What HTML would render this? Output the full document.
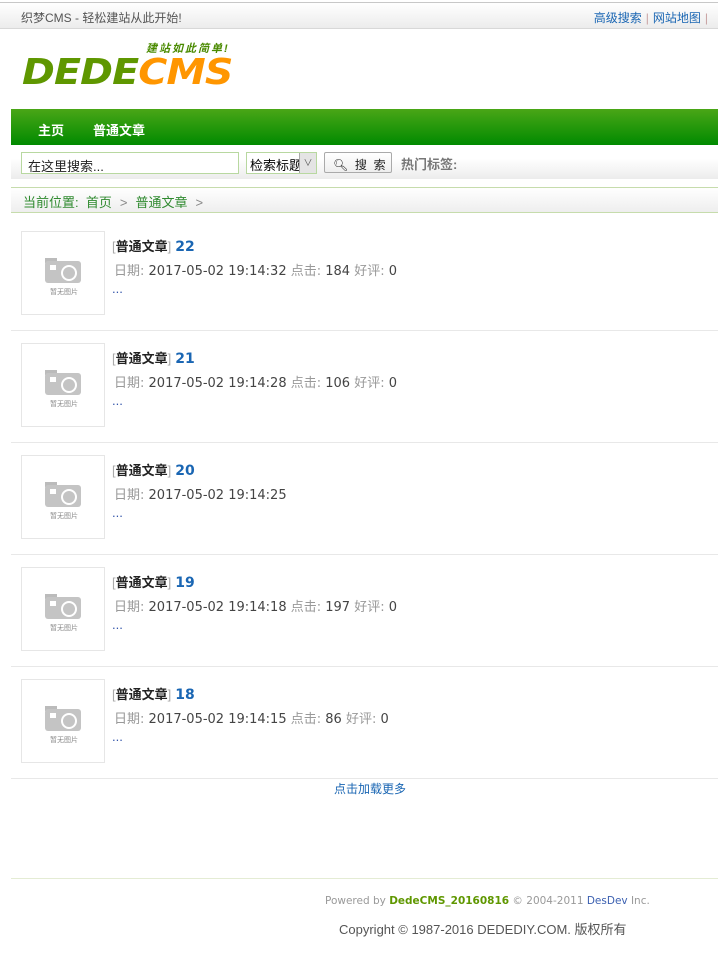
<!DOCTYPE html>
<html><head><meta charset="utf-8">
<style>
*{margin:0;padding:0;box-sizing:border-box}
body{width:718px;height:968px;overflow:hidden;background:#fff;font-family:"Liberation Sans","Noto Sans CJK SC",sans-serif;font-size:12px;color:#333;position:relative}
.abs{position:absolute;white-space:nowrap}
.top{left:0;top:2px;width:718px;height:27px;border-top:1px solid #c8c8c8;border-bottom:1px solid #d8d8d8;background:linear-gradient(#fff,#ececec)}
.top .l{left:21px;top:6px;color:#555;font-size:12px}
.top .r{right:6px;top:6px;color:#1a66b3;font-size:12px}
.top .r i{font-style:normal;color:#c8a0a0;margin:0 4px}
.nav{left:11px;top:109px;width:707px;height:36px;background:linear-gradient(#4aa617,#008a00)}
.nav span{position:absolute;top:11px;color:#fff;font-weight:bold;font-size:13px}
.sbar{left:11px;top:145px;width:707px;height:34px;background:linear-gradient(#fff 40%,#ececec)}
.inp{left:21px;top:152px;width:218px;height:22px;border:1px solid #b8d8a0;background:#fff;padding:3px 6px;font-size:13px;color:#222}
.sel{left:246px;top:152px;width:71px;height:22px;border:1px solid #b8d8a0;background:#fff;font-size:13px;padding:2px 0 0 3px;color:#000;overflow:hidden}
.sel b{position:absolute;right:0;top:0;width:17px;height:20px;background:#e4e4e4;border-left:1px solid #aaa;font-size:9px;text-align:center;line-height:20px;font-weight:normal;color:#555}
.btn{left:324px;top:152px;width:68px;height:21px;border:1px solid #aaa;border-radius:2px;background:linear-gradient(#fff,#eee);font-size:12px;padding:3px 0 0 8px;color:#222;overflow:hidden}
.hot{left:401px;top:154px;color:#777;font-weight:bold;font-size:13px}
.crumb{left:11px;top:187px;width:707px;height:26px;border-top:1px solid #c6dcac;border-bottom:1px solid #c6dcac;background:linear-gradient(#fff,#eee);color:#2f8a2f;font-size:13px;padding:4px 0 0 12px}
.crumb i{font-style:normal;color:#888;margin:0 8px}
.item{left:11px;width:707px;height:112px;border-bottom:1px solid #e8e8e8}
.thumb{position:absolute;left:10px;top:12px;width:84px;height:84px;border:1px solid #e6e6e6;background:#fff}
.t{position:absolute;left:101px;top:17px;font-size:13px;color:#222;font-weight:bold}
.t em{font-style:normal;color:#aaa;font-weight:normal}
.t a{color:#1a66b3;font-size:14px;margin-left:4px;font-family:"DejaVu Sans",sans-serif}
.d{position:absolute;left:103px;top:41px;font-size:13px;color:#444;font-family:"DejaVu Sans","Noto Sans CJK SC",sans-serif}
.d span{color:#999}
.dots{position:absolute;left:101px;top:62px;color:#3355aa;font-size:13px}
</style></head><body>
<div class="abs top"><div class="abs l">织梦CMS - 轻松建站从此开始!</div><div class="abs r">高级搜索<i>|</i>网站地图<i>|</i></div></div>
<div class="abs" style="left:146px;top:40px;color:#4a8a00;font-style:italic;font-weight:bold;font-size:11px;letter-spacing:2px">建站如此简单!</div>
<div class="abs" style="left:22px;top:55px;font-size:44px;line-height:44px;font-weight:900;font-style:italic;color:#5f9700;letter-spacing:-1px;transform:scaleX(0.9) scaleY(0.8);transform-origin:left top;font-family:'DejaVu Sans',sans-serif">DEDE<span style="color:#ff9600">CMS</span></div>
<div class="abs nav"><span style="left:27px">主页</span><span style="left:82px">普通文章</span></div>
<div class="abs sbar"></div>
<div class="abs inp">在这里搜索...</div>
<div class="abs sel">检索标题<b>∨</b></div>
<div class="abs btn">🔍︎&nbsp; 搜&nbsp; 索</div>
<div class="abs hot">热门标签:</div>
<div class="abs crumb">当前位置: &nbsp;首页<i>&gt;</i>普通文章<i>&gt;</i></div>

<div class="abs item" style="top:219px"><div class="thumb"><svg width="84" height="84"><rect x="23" y="26" width="12" height="5" fill="#bbb"/><rect x="23" y="29" width="36" height="22" rx="3" fill="#c4c4c4"/><rect x="28" y="33" width="6" height="5" fill="#fff"/><circle cx="47" cy="41" r="8" fill="#fff"/><circle cx="47" cy="41" r="6" fill="#c4c4c4"/><text x="42" y="62" font-size="7" fill="#888" text-anchor="middle" font-family="Noto Sans CJK SC">暂无图片</text></svg></div><div class="t"><em>[</em>普通文章<em>]</em><a>22</a></div><div class="d"><span>日期:</span> 2017-05-02 19:14:32 <span>点击:</span> 184 <span>好评:</span> 0</div><div class="dots">...</div></div>
<div class="abs item" style="top:331px"><div class="thumb"><svg width="84" height="84"><rect x="23" y="26" width="12" height="5" fill="#bbb"/><rect x="23" y="29" width="36" height="22" rx="3" fill="#c4c4c4"/><rect x="28" y="33" width="6" height="5" fill="#fff"/><circle cx="47" cy="41" r="8" fill="#fff"/><circle cx="47" cy="41" r="6" fill="#c4c4c4"/><text x="42" y="62" font-size="7" fill="#888" text-anchor="middle" font-family="Noto Sans CJK SC">暂无图片</text></svg></div><div class="t"><em>[</em>普通文章<em>]</em><a>21</a></div><div class="d"><span>日期:</span> 2017-05-02 19:14:28 <span>点击:</span> 106 <span>好评:</span> 0</div><div class="dots">...</div></div>
<div class="abs item" style="top:443px"><div class="thumb"><svg width="84" height="84"><rect x="23" y="26" width="12" height="5" fill="#bbb"/><rect x="23" y="29" width="36" height="22" rx="3" fill="#c4c4c4"/><rect x="28" y="33" width="6" height="5" fill="#fff"/><circle cx="47" cy="41" r="8" fill="#fff"/><circle cx="47" cy="41" r="6" fill="#c4c4c4"/><text x="42" y="62" font-size="7" fill="#888" text-anchor="middle" font-family="Noto Sans CJK SC">暂无图片</text></svg></div><div class="t"><em>[</em>普通文章<em>]</em><a>20</a></div><div class="d"><span>日期:</span> 2017-05-02 19:14:25</div><div class="dots">...</div></div>
<div class="abs item" style="top:555px"><div class="thumb"><svg width="84" height="84"><rect x="23" y="26" width="12" height="5" fill="#bbb"/><rect x="23" y="29" width="36" height="22" rx="3" fill="#c4c4c4"/><rect x="28" y="33" width="6" height="5" fill="#fff"/><circle cx="47" cy="41" r="8" fill="#fff"/><circle cx="47" cy="41" r="6" fill="#c4c4c4"/><text x="42" y="62" font-size="7" fill="#888" text-anchor="middle" font-family="Noto Sans CJK SC">暂无图片</text></svg></div><div class="t"><em>[</em>普通文章<em>]</em><a>19</a></div><div class="d"><span>日期:</span> 2017-05-02 19:14:18 <span>点击:</span> 197 <span>好评:</span> 0</div><div class="dots">...</div></div>
<div class="abs item" style="top:667px"><div class="thumb"><svg width="84" height="84"><rect x="23" y="26" width="12" height="5" fill="#bbb"/><rect x="23" y="29" width="36" height="22" rx="3" fill="#c4c4c4"/><rect x="28" y="33" width="6" height="5" fill="#fff"/><circle cx="47" cy="41" r="8" fill="#fff"/><circle cx="47" cy="41" r="6" fill="#c4c4c4"/><text x="42" y="62" font-size="7" fill="#888" text-anchor="middle" font-family="Noto Sans CJK SC">暂无图片</text></svg></div><div class="t"><em>[</em>普通文章<em>]</em><a>18</a></div><div class="d"><span>日期:</span> 2017-05-02 19:14:15 <span>点击:</span> 86 <span>好评:</span> 0</div><div class="dots">...</div></div>

<div class="abs" style="left:334px;top:780px;color:#1a66b3;font-size:12px">点击加载更多</div>
<div class="abs" style="left:11px;top:878px;width:707px;border-top:1px solid #e4ecd4"></div>
<div class="abs" style="left:325px;top:895px;font-size:10.5px;color:#999;font-family:'DejaVu Sans',sans-serif">Powered by <b style="color:#5f9700">DedeCMS_20160816</b> © 2004-2011 <span style="color:#3a5fb0">DesDev</span> Inc.</div>
<div class="abs" style="left:339px;top:919px;font-size:13px;color:#555">Copyright © 1987-2016 DEDEDIY.COM. 版权所有</div>
</body></html>
